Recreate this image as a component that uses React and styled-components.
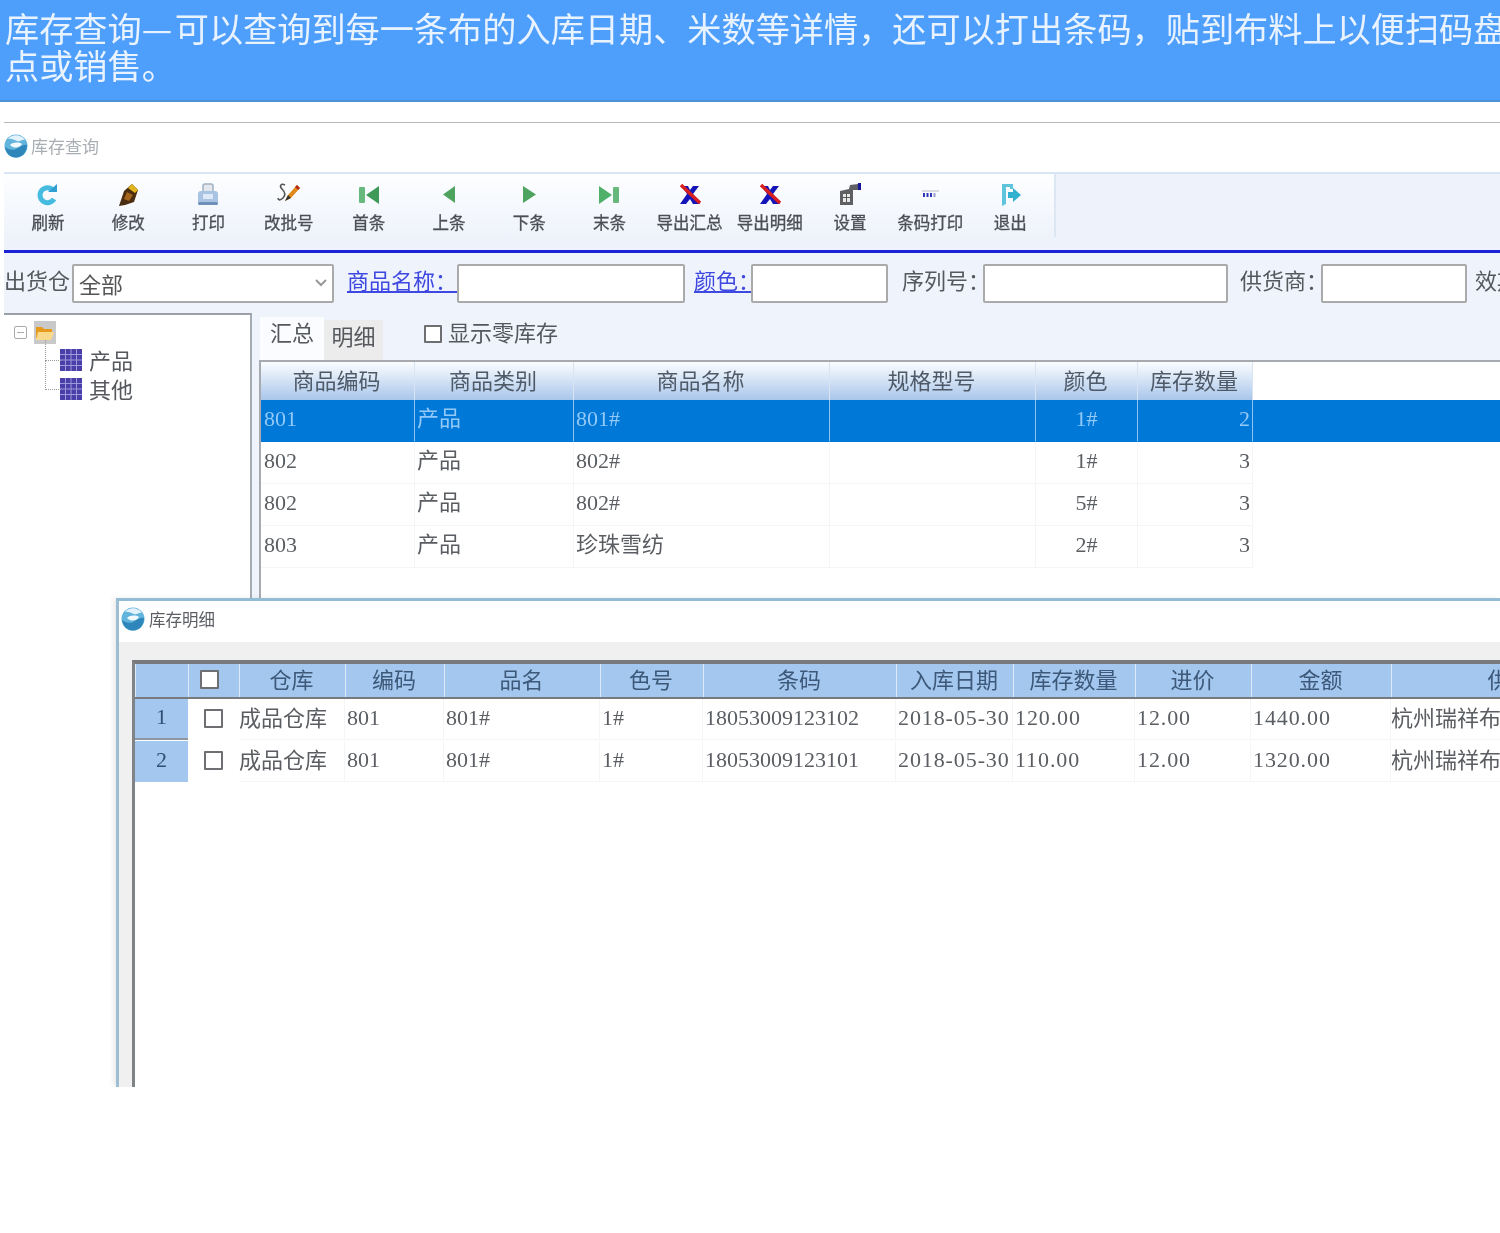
import React from 'react';
import styled, { createGlobalStyle } from 'styled-components';

const HAN = '"Noto Sans CJK SC", "Liberation Sans", sans-serif';
const LATIN = '"Liberation Serif", "Noto Sans CJK SC", serif';

const GlobalStyle = createGlobalStyle`
    html, body {
        margin: 0;
        padding: 0;
        background: #fff;
        overflow: hidden;
    }
    * {
        box-sizing: border-box;
    }
`;

const Page = styled.div`
    width: 1500px;
    height: 1233px;
    overflow: hidden;
    font-family: ${HAN};
    filter: blur(0.7px);
`;

const Banner = styled.div`
    height: 102px;
    padding: 9px 0 0 5px;
    background: #4e9efb;
    border-bottom: 2px solid #4b93d6;
    overflow: hidden;
`;

const BannerText = styled.p`
    width: 1530px;
    margin: 0;
    font-size: 34.18px;
    line-height: 37px;
    color: #e9f3ff;
`;

const BannerDash = styled.span`
    letter-spacing: 2.5px;
`;

const Shot = styled.div`
    position: relative;
    height: 985px;
    padding: 20px 0 0 4px;
    display: flex;
    flex-direction: column;
    overflow: hidden;
    background: #fff;
`;

const TitleBar = styled.div`
    height: 50px;
    flex: none;
    padding-bottom: 4px;
    display: flex;
    align-items: center;
    gap: 3px;
    border-top: 1px solid #b4b8bc;
    font-size: 17px;
    color: #a9aeb4;
`;

const ToolBand = styled.div`
    height: 81px;
    flex: none;
    background: #eef3fb;
    border-top: 2px solid #d9e5f5;
    border-bottom: 3px solid #1b22d8;
`;

const Toolbar = styled.div`
    width: 1052px;
    height: 63px;
    padding-left: 4px;
    display: flex;
    background: linear-gradient(#fdfeff, #eef3fb);
    border-right: 2px solid #dde6f3;
`;

const ToolButton = styled.div`
    width: 80.2px;
    display: flex;
    flex-direction: column;
    align-items: center;
    color: #4c4f55;
    font-size: 16.5px;
    line-height: 22px;
    -webkit-text-stroke: 0.3px #4c4f55;
    white-space: nowrap;
`;

const ToolIcon = styled.svg`
    width: 26px;
    height: 26px;
    margin-top: 8px;
    margin-bottom: 3px;
    flex: none;
`;

const FilterBar = styled.div`
    height: 60px;
    flex: none;
    padding: 11px 0 0;
    display: flex;
    align-items: flex-start;
    background: #eef3fc;
    white-space: nowrap;
    overflow: hidden;
`;

const FilterLabel = styled.span`
    flex: none;
    width: ${(p) => p.$w}px;
    margin-left: ${(p) => p.$ml || 0}px;
    height: 36px;
    overflow: hidden;
    font-size: 22px;
    line-height: 31px;
    color: ${(p) => (p.$link ? '#3f48e0' : '#55585c')};
    text-decoration: ${(p) => (p.$link ? 'underline' : 'none')};
`;

const FilterInput = styled.div`
    flex: none;
    width: ${(p) => p.$w}px;
    height: 39px;
    background: #fff;
    border: 2px solid #aaa;
    border-radius: 2px;
`;

const SelectBox = styled(FilterInput)`
    display: flex;
    align-items: center;
    justify-content: space-between;
    padding: 0 4px 2px 5px;
    font-size: 22px;
    color: #555;
`;

const Main = styled.div`
    flex: 1;
    min-height: 0;
    display: flex;
    background: #eef3fc;
`;

const TreePanel = styled.div`
    width: 248px;
    flex: none;
    padding: 5px 0 0 10px;
    background: #fff;
    border-top: 2px solid #9aa0a6;
    border-right: 2px solid #a4abb3;
    font-size: 22px;
    color: #55585c;
`;

const TreeRoot = styled.div`
    height: 25px;
    display: flex;
    align-items: center;
`;

const Expander = styled.span`
    width: 13px;
    height: 13px;
    margin-right: 7px;
    flex: none;
    border: 1px solid #aaa;
    border-radius: 2px;
    background: linear-gradient(#aaa, #aaa) center / 7px 1px no-repeat, #fff;
`;

const TreeChild = styled.div`
    position: relative;
    height: 29px;
    margin-left: 46px;
    display: flex;
    align-items: center;
    gap: 7px;
    line-height: 29px;

    &::before {
        content: '';
        position: absolute;
        left: -15px;
        top: ${(p) => (p.$first ? '-5px' : '-14px')};
        width: 15px;
        height: ${(p) => (p.$first ? '20px' : '29px')};
        border-left: 1px dotted #999;
        border-bottom: 1px dotted #999;
    }
`;

const RightPanel = styled.div`
    flex: 1;
    min-width: 0;
    padding-left: 7px;
    display: flex;
    flex-direction: column;
`;

const TabRow = styled.div`
    height: 47px;
    flex: none;
    padding-left: 1px;
    display: flex;
    align-items: flex-end;
    font-size: 22px;
    color: #55585c;
`;

const Tab = styled.div`
    width: ${(p) => (p.$active ? 64 : 59)}px;
    height: ${(p) => (p.$active ? 43 : 40)}px;
    text-align: center;
    line-height: ${(p) => (p.$active ? 28 : 30)}px;
    background: ${(p) => (p.$active ? '#fbfcff' : '#ececec')};
`;

const ZeroStock = styled.label`
    margin-left: 41px;
    height: 43px;
    display: flex;
    align-items: center;
    gap: 6px;
    line-height: 36px;
    padding-bottom: 16px;
`;

const CheckBox = styled.span`
    display: block;
    flex: none;
    width: ${(p) => p.$size || 18}px;
    height: ${(p) => p.$size || 18}px;
    background: #fff;
    border: 2px solid #6d6f72;
    border-radius: 1px;
`;

const ZeroCheck = styled(CheckBox)`
    margin-top: 6px;
`;

const SummaryGrid = styled.div`
    flex: 1;
    background: #fff;
    border-top: 2px solid #a6a9ad;
    border-left: 2px solid #a6abb2;
`;

const GridRow = styled.div`
    display: grid;
    grid-template-columns: ${(p) => p.$cols};
    height: ${(p) => p.$h}px;
    background: ${(p) => p.$bg || 'transparent'};
`;

const SummaryHead = styled.div`
    display: flex;
    align-items: center;
    justify-content: center;
    padding: 0 2px 5px 0;
    font-size: 22px;
    line-height: 28px;
    color: #4f5a68;
    background: linear-gradient(#fbfdff, #a9c6ea);
    border-right: 1px solid #d8e4f2;
`;

const Cell = styled.div`
    display: flex;
    align-items: center;
    justify-content: ${(p) => p.$align || 'flex-start'};
    padding: 0 ${(p) => p.$pad ?? 2}px ${(p) => p.$lift ?? (p.$han ? 10 : 4)}px;
    white-space: nowrap;
    overflow: hidden;
    font-family: ${(p) => (p.$han ? HAN : LATIN)};
    font-size: 22px;
    line-height: 28px;
    letter-spacing: ${(p) => p.$track || 0}px;
    color: ${(p) => (p.$selected ? '#93c9f6' : '#5a5d61')};
    border-right: 1px solid ${(p) => (p.$selected ? '#8fc4f0' : '#f4f5f6')};
    border-bottom: 1px solid ${(p) => (p.$selected ? '#0078d7' : '#f4f5f6')};
`;

const Dialog = styled.div`
    position: absolute;
    left: 116px;
    top: 496px;
    right: 0;
    bottom: 0;
    display: flex;
    flex-direction: column;
    background: #f0f0f0;
    border-top: 3px solid #93bcd6;
    border-left: 3px solid #9dbdd2;
    box-shadow: -3px 0 5px rgba(0, 0, 0, 0.08);
`;

const DialogTitle = styled.div`
    height: 41px;
    flex: none;
    padding: 0 0 6px 2px;
    display: flex;
    align-items: center;
    gap: 4px;
    background: #fff;
    font-size: 16.5px;
    color: #5b5e63;
`;

const DialogBody = styled.div`
    flex: 1;
    min-height: 0;
    padding: 18px 0 0 13px;
    display: flex;
`;

const DetailGrid = styled.div`
    flex: 1;
    min-width: 0;
    background: #fff;
    border-top: 4px solid #77797c;
    border-left: 3px solid #808487;
    overflow: hidden;
`;

const DetailHeadRow = styled(GridRow)`
    width: 1600px;
    border-bottom: 2px solid #77797c;
`;

const DetailHead = styled.div`
    display: flex;
    align-items: center;
    justify-content: center;
    padding: 0 2px 6px 0;
    font-size: 22px;
    line-height: 24px;
    color: #3d5878;
    background: #a3c7ee;
    border-left: 1px solid #dce9f8;
`;

const HeadCheckCell = styled(DetailHead)`
    padding: 0 10px 2px 0;
`;

const DetailRow = styled(GridRow)`
    width: 1600px;
    margin-bottom: 1px;
`;

const RowHead = styled.div`
    display: flex;
    align-items: center;
    justify-content: center;
    padding-bottom: 4px;
    background: #a3c7ee;
    color: #2f4f76;
    font-family: "Liberation Serif", serif;
    font-size: 22px;
    border-bottom: ${(p) => (p.$line ? '2px solid #8f969e' : 'none')};
`;

const CheckCell = styled.div`
    display: flex;
    align-items: center;
    justify-content: center;
    padding-bottom: 2px;
`;

function Globe({ size = 24 }) {
    return (
        <svg width={size} height={size} viewBox="0 0 24 24" style={{ flex: 'none' }}>
            <circle cx="12" cy="12" r="11.500" fill="#62b4dc" />
            <path d="M4 5C8 0 17 0 21 6c-3-1-5 2-8 1S7 4 4 5z" fill="#e3f2fa" />
            <path d="M1 13c3 2 7 4 11 2s7-5 11-4c0 7-5 12.500-11 12.500S2 19 1 13z" fill="#2f86ba" />
            <path d="M6 11c3-3 9-3 12-1-2 4-8 5-12 1z" fill="#f2f9fd" />
        </svg>
    );
}

const ICONS = {
    refresh: (
        <>
            <path d="M18 8A7.500 7.500 0 1 0 19 17" fill="none" stroke="#45bbdf" strokeWidth="5" />
            <path d="M13 10h9V2z" fill="#2f9fd2" />
        </>
    ),
    edit: (
        <>
            <path d="M4 24 9 9l8-7 6 6-4 12-9 3z" fill="#4b2d12" />
            <path d="M13 6l4-4 6 6-3 3z" fill="#e2b51e" />
            <path d="M12 10l6 3-4 6-5-2z" fill="#a3641c" />
        </>
    ),
    print: (
        <>
            <path d="M8 10V4q0-2 2-2h6q2 0 2 2v6" fill="#e4e8ee" stroke="#9fb0c4" strokeWidth="1.500" />
            <rect x="3" y="9" width="20" height="14" rx="3" fill="#a9c3e2" />
            <rect x="8" y="12" width="10" height="5" fill="#dde9f6" />
            <rect x="3" y="20" width="20" height="3" rx="1.500" fill="#6f8fb8" />
        </>
    ),
    sign: (
        <>
            <path d="M9 3C5 1 3 4 6 7s4 6 1 9-5 2-5 0" fill="none" stroke="#555" strokeWidth="1.600" />
            <path d="M9 19l3-6 9-10 3 3-9 10z" fill="#e08a1c" />
            <path d="M21 3l3 3-2 2-3-3z" fill="#b32a1a" />
            <path d="M9 19l3-6 3 3z" fill="#333" />
        </>
    ),
    first: (
        <>
            <rect x="3" y="5" width="6" height="16" rx="1" fill="#67b87c" />
            <path d="M23 4v18L10 13z" fill="#3f9a5a" />
        </>
    ),
    prev: <path d="M19 4v17L7 12.500z" fill="#4ea35f" />,
    next: <path d="M7 4v17l13-8.500z" fill="#4ea35f" />,
    last: (
        <>
            <path d="M3 4v18l13-9z" fill="#4fb06a" />
            <rect x="17" y="5" width="6" height="16" rx="1" fill="#67b87c" />
        </>
    ),
    export: (
        <>
            <path d="M5 4h6l2 4 3-4h6l-6 8 7 10h-7l-3-5-4 5H3l7-10z" fill="#1414b8" />
            <path d="M4 3l19 18" stroke="#d81e1e" strokeWidth="3.500" />
        </>
    ),
    setting: (
        <>
            <path d="M3 9l9-2 1-4 8-1v6h-5v15H3z" fill="#5e6063" />
            <rect x="6" y="12" width="7" height="8" fill="#e8e8e8" />
            <path d="M6 15.500h7M9.500 12v8" stroke="#555" />
            <rect x="21" y="1" width="3" height="7" fill="#15159a" />
        </>
    ),
    barcode: (
        <>
            <path d="M5 9h17" stroke="#b9bcc2" />
            <rect x="6" y="11" width="2" height="4" fill="#2e37b8" />
            <rect x="9.500" y="11" width="2" height="4" fill="#2e37b8" />
            <rect x="13" y="11" width="2" height="4" fill="#2e37b8" />
            <rect x="16.500" y="11" width="2" height="4" fill="#9aa0c8" />
        </>
    ),
    exit: (
        <>
            <path d="M5 2h11v5h-3V5H9v17l-4 2z" fill="#5fc5dc" />
            <path d="M11 10h5V6l8 7-8 7v-4h-5z" fill="#32b0d0" />
        </>
    ),
};

const TOOLS = [
    ['refresh', '刷新'],
    ['edit', '修改'],
    ['print', '打印'],
    ['sign', '改批号'],
    ['first', '首条'],
    ['prev', '上条'],
    ['next', '下条'],
    ['last', '末条'],
    ['export', '导出汇总'],
    ['export', '导出明细'],
    ['setting', '设置'],
    ['barcode', '条码打印'],
    ['exit', '退出'],
];

const SUMMARY_COLS = '154px 159px 256px 206px 102px 115px 1fr';
const SUMMARY_HEAD = ['商品编码', '商品类别', '商品名称', '规格型号', '颜色', '库存数量'];
const SUMMARY_ROWS = [
    ['801', '产品', '801#', '1#', '2'],
    ['802', '产品', '802#', '1#', '3'],
    ['802', '产品', '802#', '5#', '3'],
    ['803', '产品', '珍珠雪纺', '2#', '3'],
];

const DETAIL_COLS = '53px 51px 106px 99px 156px 103px 193px 117px 122px 116px 140px 260px 1fr';
const DETAIL_HEAD = ['仓库', '编码', '品名', '色号', '条码', '入库日期', '库存数量', '进价', '金额', '供货商'];
const DETAIL_ROWS = [
    ['成品仓库', '801', '801#', '1#', '18053009123102', '2018-05-30', '120.00', '12.00', '1440.00', '杭州瑞祥布业'],
    ['成品仓库', '801', '801#', '1#', '18053009123101', '2018-05-30', '110.00', '12.00', '1320.00', '杭州瑞祥布业'],
];

function FolderIcon() {
    return (
        <svg width="22" height="23" viewBox="0 0 22 23" style={{ flex: 'none' }}>
            <rect width="22" height="23" fill="#c9c9c9" />
            <path d="M2 6h6l2 2h8v9H2z" fill="#e79a1c" />
            <path d="M4 11h16l-3 8H2z" fill="#fbd98a" />
        </svg>
    );
}

function GridIcon() {
    return (
        <svg width="22" height="22" viewBox="0 0 22 22" style={{ flex: 'none' }}>
            <rect width="22" height="22" fill="#4a3fa8" />
            <path d="M5.500 0v22M11 0v22M16.500 0v22M0 5.500h22M0 11h22M0 16.500h22" stroke="#9c9ada" strokeWidth="1" />
        </svg>
    );
}

function Chevron() {
    return (
        <svg width="14" height="10" viewBox="0 0 14 10">
            <path d="M2 2l5 5 5-5" fill="none" stroke="#999" strokeWidth="2" />
        </svg>
    );
}

const App = () => (
    <Page>
        <GlobalStyle />
        <Banner>
            <BannerText>
                库存查询<BannerDash>—</BannerDash>可以查询到每一条布的入库日期、米数等详情，还可以打出条码，贴到布料上以便扫码盘点或销售。
            </BannerText>
        </Banner>
        <Shot>
            <TitleBar>
                <Globe />
                库存查询
            </TitleBar>
            <ToolBand>
                <Toolbar>
                    {TOOLS.map(([icon, label]) => (
                        <ToolButton key={label}>
                            <ToolIcon viewBox="0 0 26 26">{ICONS[icon]}</ToolIcon>
                            {label}
                        </ToolButton>
                    ))}
                </Toolbar>
            </ToolBand>
            <FilterBar>
                <FilterLabel $w={68}>出货仓</FilterLabel>
                <SelectBox $w={262}>
                    全部
                    <Chevron />
                </SelectBox>
                <FilterLabel $w={110} $ml={13} $link>
                    商品名称：
                </FilterLabel>
                <FilterInput $w={228} />
                <FilterLabel $w={57} $ml={9} $link>
                    颜色：
                </FilterLabel>
                <FilterInput $w={137} />
                <FilterLabel $w={81} $ml={14}>
                    序列号：
                </FilterLabel>
                <FilterInput $w={245} />
                <FilterLabel $w={81} $ml={12}>
                    供货商：
                </FilterLabel>
                <FilterInput $w={146} />
                <FilterLabel $w={40} $ml={8}>
                    效期
                </FilterLabel>
            </FilterBar>
            <Main>
                <TreePanel>
                    <TreeRoot>
                        <Expander />
                        <FolderIcon />
                    </TreeRoot>
                    <TreeChild $first>
                        <GridIcon />
                        产品
                    </TreeChild>
                    <TreeChild>
                        <GridIcon />
                        其他
                    </TreeChild>
                </TreePanel>
                <RightPanel>
                    <TabRow>
                        <Tab $active>汇总</Tab>
                        <Tab>明细</Tab>
                        <ZeroStock>
                            <ZeroCheck />
                            显示零库存
                        </ZeroStock>
                    </TabRow>
                    <SummaryGrid>
                        <GridRow $cols={SUMMARY_COLS} $h={38}>
                            {SUMMARY_HEAD.map((title) => (
                                <SummaryHead key={title}>{title}</SummaryHead>
                            ))}
                        </GridRow>
                        {SUMMARY_ROWS.map((row, i) => {
                            const selected = i === 0;
                            return (
                                <GridRow key={i} $cols={SUMMARY_COLS} $h={42} $bg={selected ? '#0078d7' : undefined}>
                                    <Cell $selected={selected} $pad={3}>{row[0]}</Cell>
                                    <Cell $selected={selected} $han>{row[1]}</Cell>
                                    <Cell $selected={selected} $han={!row[2].includes('#')}>
                                        {row[2]}
                                    </Cell>
                                    <Cell $selected={selected} />
                                    <Cell $selected={selected} $align="center">{row[3]}</Cell>
                                    <Cell $selected={selected} $align="flex-end">{row[4]}</Cell>
                                </GridRow>
                            );
                        })}
                    </SummaryGrid>
                </RightPanel>
            </Main>
            <Dialog>
                <DialogTitle>
                    <Globe />
                    库存明细
                </DialogTitle>
                <DialogBody>
                    <DetailGrid>
                        <DetailHeadRow $cols={DETAIL_COLS} $h={35}>
                            <DetailHead />
                            <HeadCheckCell>
                                <CheckBox $size={19} />
                            </HeadCheckCell>
                            {DETAIL_HEAD.map((title) => (
                                <DetailHead key={title}>{title}</DetailHead>
                            ))}
                        </DetailHeadRow>
                        {DETAIL_ROWS.map((row, i) => (
                            <DetailRow key={i} $cols={DETAIL_COLS} $h={41}>
                                <RowHead $line={i === 0}>{i + 1}</RowHead>
                                <CheckCell>
                                    <CheckBox $size={19} />
                                </CheckCell>
                                {row.map((value, j) => (
                                    <Cell
                                        key={j}
                                        $han={j === 0 || j === 9}
                                        $lift={j === 0 || j === 9 ? 6 : 2}
                                        $pad={j === 0 || j === 9 ? 0 : 2}
                                        $track={j >= 5 && j <= 8 ? 0.9 : 0}
                                    >
                                        {value}
                                    </Cell>
                                ))}
                            </DetailRow>
                        ))}
                    </DetailGrid>
                </DialogBody>
            </Dialog>
        </Shot>
    </Page>
);

export default App;
